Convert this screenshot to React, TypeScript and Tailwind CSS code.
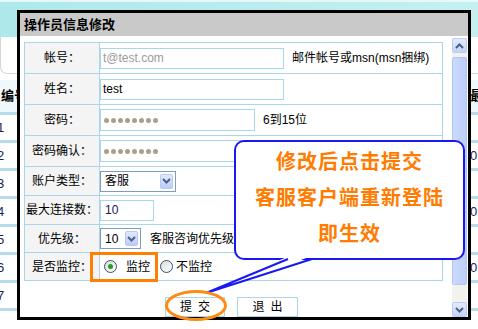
const font = "font-['Liberation_Sans','Noto_Sans_CJK_SC',sans-serif]";

function Chevron({ up }: { up?: boolean }) {
  return (
    <svg width="9" height="6" viewBox="0 0 9 6">
      <path
        d={up ? "M1 5 L4.5 1.5 L8 5" : "M1 1 L4.5 4.5 L8 1"}
        fill="none"
        stroke="#4d6185"
        strokeWidth="2"
      />
    </svg>
  );
}

function Label({ children }: { children: React.ReactNode }) {
  return (
    <div className="w-[75px] shrink-0 self-stretch flex items-center justify-center whitespace-nowrap bg-[#f4f4f4] border-r border-[#a9d6e8] text-[12px] leading-none text-black">
      {children}
    </div>
  );
}

function Field({ w, children, h = "h-[21px]" }: { w: string; h?: string; children?: React.ReactNode }) {
  return (
    <div className={`${w} ${h} border border-[#a9d6e8] bg-white flex items-center pl-[2px] text-[12px] leading-none`}>
      {children}
    </div>
  );
}

function Dots() {
  return (
    <div className="flex gap-[2px] pl-[1px]">
      {Array.from({ length: 8 }).map((_, i) => (
        <span key={i} className="w-[5px] h-[5px] rounded-full bg-[#aa9f8c]" />
      ))}
    </div>
  );
}

function Select({ w, value }: { w: string; value: string }) {
  return (
    <div className={`${w} h-[21px] border border-[#7f9db9] bg-white flex items-center text-[12px] leading-none`}>
      <span className="pl-[4px]">{value}</span>
      <span className="ml-auto mr-[2px] w-[13px] h-[15px] rounded-[2px] border border-[#b9c9ef] bg-gradient-to-b from-[#e1e9fe] to-[#b9cdf9] flex items-center justify-center">
        <Chevron />
      </span>
    </div>
  );
}

function Radio({ checked }: { checked?: boolean }) {
  return (
    <span className="w-[13px] h-[13px] rounded-full border border-[#34507a] bg-gradient-to-br from-[#dcdcd4] to-white flex items-center justify-center">
      {checked && <span className="w-[5px] h-[5px] rounded-full bg-[#21a121]" />}
    </span>
  );
}

function Row({ h, label, children }: { h: string; label: string; children: React.ReactNode }) {
  return (
    <div className={`${h} flex border-b border-[#a9d6e8]`}>
      <Label>{label}</Label>
      <div className="flex-1 flex items-center whitespace-nowrap text-[12px] leading-none">{children}</div>
    </div>
  );
}

function Background() {
  const nums = ["1", "2", "3", "4", "5", "6", "7"];
  const right = ["", "0", "", "0", "", "0", ""];
  return (
    <div className="flex flex-col">
      <div className="h-[37px] bg-gradient-to-r from-[#aee8eb] to-[#c4f0f2] border-t-[2px] border-[#e6f8f8]" />
      <div className="h-[37px] border-l border-b border-[#d6d6d6] rounded-bl-[7px] bg-white" />
      <div className="h-[6px]" />
      <div className="h-[32px] flex items-center justify-between bg-[#eef8fd] text-[13px] font-bold">
        <span className="pl-[1px]">编号</span>
        <span className="w-[8px]">最</span>
      </div>
      {nums.map((n, i) => (
        <div
          key={n}
          className="h-[28px] border-t-[3px] border-[#b6dbe9] flex items-center justify-between text-[13px] text-[#1c1c5a]"
        >
          <span className="-ml-[3px]">{n}</span>
          <span className="w-[8px]">{right[i]}</span>
        </div>
      ))}
      <div className="border-t-[3px] border-[#b6dbe9]" />
    </div>
  );
}

function Scrollbar() {
  return (
    <div className="w-[15px] mr-[1px] mt-[2px] flex flex-col bg-[#f3f3ee]">
      <div className="h-[15px] rounded-[2px] border border-[#bccbf2] bg-gradient-to-b from-[#e4ebfe] to-[#c3d3fb] flex items-center justify-center">
        <Chevron up />
      </div>
      <div className="mt-[4px] h-[228px] rounded-[2px] border border-[#b3c6f3] bg-gradient-to-r from-[#cbd9fd] to-[#bccefa]" />
      <div className="flex-1" />
      <div className="h-[15px] rounded-[2px] border border-[#bccbf2] bg-gradient-to-b from-[#e4ebfe] to-[#c3d3fb] flex items-center justify-center">
        <Chevron />
      </div>
    </div>
  );
}

function Dialog() {
  return (
    <div className="absolute left-[17px] top-[10px] w-[454px] h-[310px] border-[3px] border-black bg-white flex flex-col">
      <div className="h-[23px] bg-[#c9c9c9] flex items-center pl-[4px] text-[13px] font-bold leading-none">
        操作员信息修改
      </div>
      <div className="flex-1 flex">
        <div className="flex-1 pl-[4px] pt-[6px]">
          <div className="w-[419px] border-l border-r border-t border-[#a9d6e8]">
            <Row h="h-[31px]" label="帐号：">
              <Field w="w-[184px]">
                <span className="text-[#9a9a9a]">t@test.com</span>
              </Field>
              <span className="ml-[8px]">邮件帐号或msn(msn捆绑)</span>
            </Row>
            <Row h="h-[31px]" label="姓名：">
              <Field w="w-[184px]">test</Field>
            </Row>
            <Row h="h-[31px]" label="密码：">
              <Field w="w-[155px]" h="h-[22px]">
                <Dots />
              </Field>
              <span className="ml-[8px]">6到15位</span>
            </Row>
            <Row h="h-[31px]" label="密码确认：">
              <Field w="w-[155px]" h="h-[22px]">
                <Dots />
              </Field>
            </Row>
            <Row h="h-[29px]" label="账户类型：">
              <Select w="w-[76px]" value="客服" />
            </Row>
            <Row h="h-[29px]" label="最大连接数：">
              <Field w="w-[54px]">
                <span className="text-[#14145c] pl-[2px]">10</span>
              </Field>
            </Row>
            <Row h="h-[28px]" label="优先级：">
              <Select w="w-[41px]" value="10" />
              <span className="ml-[9px]">客服咨询优先级</span>
            </Row>
            <Row h="h-[28px]" label="是否监控：">
              <span className="ml-[4px]">
                <Radio checked />
              </span>
              <span className="ml-[9px]">监控</span>
              <span className="ml-[10px]">
                <Radio />
              </span>
              <span className="ml-[3px]">不监控</span>
            </Row>
          </div>
          <div className="mt-[16px] pl-[141px] flex gap-[12px] text-[12px] leading-none">
            <div className="w-[60px] h-[20px] border border-[#a9d6e8] flex items-center justify-center tracking-[6px] pl-[6px]">
              提交
            </div>
            <div className="w-[61px] h-[20px] border border-[#a9d6e8] flex items-center justify-center tracking-[6px] pl-[6px]">
              退出
            </div>
          </div>
        </div>
        <Scrollbar />
      </div>
    </div>
  );
}

export default function App() {
  return (
    <div className={`relative w-[478px] h-[329px] overflow-hidden bg-white text-black ${font}`}>
      <Background />
      <Dialog />
      <div className="absolute left-[234px] top-[140px] w-[231px] h-[120px] rounded-[10px] border-2 border-[#1818f4] bg-white pt-[2px] text-center text-[20px] font-bold leading-[36px] tracking-[1px] text-[#ff7c00]">
        <div>修改后点击提交</div>
        <div>客服客户端重新登陆</div>
        <div>即生效</div>
      </div>
      <svg className="absolute left-0 top-0" width="478" height="329">
        <polygon points="289,256 206,293 312,256" fill="white" />
        <polyline points="288,259 206,293 312,259" fill="none" stroke="#1818f4" strokeWidth="2" />
      </svg>
      <div className="absolute left-[90px] top-[252px] w-[68px] h-[30px] border-[3px] border-[#ff7f00]" />
      <div className="absolute left-[165px] top-[290px] w-[62px] h-[31px] rounded-[50%] border-[3px] border-[#ff8a12]" />
    </div>
  );
}
